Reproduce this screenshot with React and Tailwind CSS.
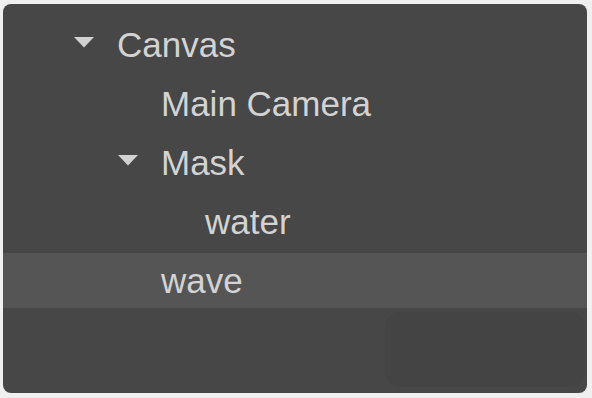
import React from "react";

const rows = [
  { label: "Canvas", level: 0, caret: true },
  { label: "Main Camera", level: 1 },
  { label: "Mask", level: 1, caret: true },
  { label: "water", level: 2 },
  { label: "wave", level: 1, selected: true },
];

const pad = ["pl-[114px]", "pl-[158px]", "pl-[202px]"];

function Caret() {
  return (
    <svg width="22" height="12" viewBox="0 0 22 12" className="absolute -left-[44px] top-1/2 -translate-y-[9px]">
      <path d="M1 1 L21 1 L11 11.5 Z" fill="#d2d2d2" />
    </svg>
  );
}

export default function App() {
  return (
    <div className="w-[592px] h-[398px] bg-[#f0f0f0] pt-[4px] pl-[3px]" style={{ fontFamily: '"Liberation Sans", Arial, sans-serif' }}>
      <div className="w-[584px] h-[389px] bg-[#474747] rounded-[8px] flex flex-col pt-[13px] overflow-hidden">
        <div className="flex flex-col gap-[4px]">
          {rows.map((r) => (
            <div
              key={r.label}
              className={`h-[55px] flex items-center ${pad[r.level]} ${r.selected ? "bg-[#555555]" : ""}`}
            >
              <span className="relative text-[35px] leading-none text-[#d3d3d3]">
                {r.caret && <Caret />}
                {r.label}
              </span>
            </div>
          ))}
        </div>
        <div className="flex-1 flex justify-end items-start pt-[4px] pr-[2px]">
          <div className="w-[200px] h-[75px] rounded-[15px] bg-[#444444]" />
        </div>
      </div>
    </div>
  );
}
